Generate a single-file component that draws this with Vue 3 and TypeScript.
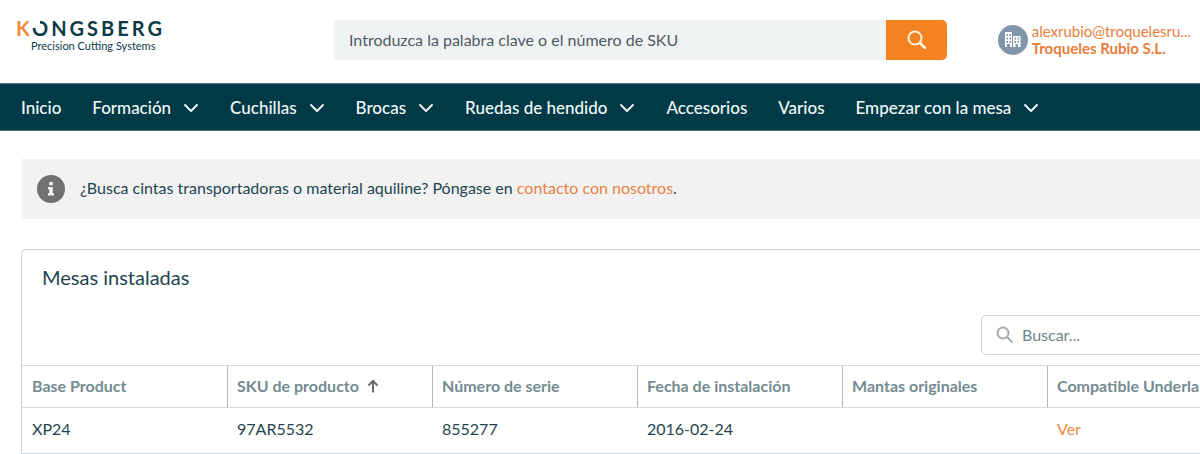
<script setup lang="ts">
import { ref } from 'vue'

interface NavItem { label: string; menu: boolean }
interface Table { product: string; sku: string; serial: string; date: string; mats: string; underlay: string }
interface Column { key: keyof Table; label: string; sorted?: boolean }

const keyword = ref('')
const filter = ref('')

const nav: NavItem[] = [
  { label: 'Inicio', menu: false },
  { label: 'Formación', menu: true },
  { label: 'Cuchillas', menu: true },
  { label: 'Brocas', menu: true },
  { label: 'Ruedas de hendido', menu: true },
  { label: 'Accesorios', menu: false },
  { label: 'Varios', menu: false },
  { label: 'Empezar con la mesa', menu: true },
]

const columns: Column[] = [
  { key: 'product', label: 'Base Product' },
  { key: 'sku', label: 'SKU de producto', sorted: true },
  { key: 'serial', label: 'Número de serie' },
  { key: 'date', label: 'Fecha de instalación' },
  { key: 'mats', label: 'Mantas originales' },
  { key: 'underlay', label: 'Compatible Underla' },
]

const rows: Table[] = [
  { product: 'XP24', sku: '97AR5532', serial: '855277', date: '2016-02-24', mats: '', underlay: 'Ver' },
]
</script>

<template>
  <div class="page">
    <header class="header">
      <a class="logo" href="#" aria-label="Kongsberg Precision Cutting Systems">
        <span class="wordmark"><span class="k">K</span><span class="o">O</span>NGSBERG</span>
        <span class="tagline">Precision Cutting Systems</span>
      </a>
      <form class="search" role="search" @submit.prevent>
        <input v-model="keyword" type="text" aria-label="Buscar productos" placeholder="Introduzca la palabra clave o el número de SKU" />
        <button type="submit" aria-label="Buscar">
          <svg width="20" height="20" viewBox="0 0 20 20" fill="none" stroke="#fff3e2" stroke-width="2" stroke-linecap="round">
            <circle cx="8" cy="8" r="6.500" />
            <path d="M13 13L18 18" stroke-width="2.500" />
          </svg>
        </button>
      </form>
      <a class="account" href="#">
        <svg width="30" height="30" viewBox="0 0 30 30">
          <circle cx="15" cy="15" r="15" fill="#8096ab" />
          <path fill="#fff" fill-rule="evenodd" d="M7 7h7v15h-2v-3H9v3H7zM8.500 9v2h1.500V9zM11.500 9v2H13V9zM8.500 12.500v2H10v-2zM11.500 12.500v2H13v-2zM8.500 16v2H10v-2zM11.500 16v2H13v-2zM15 11h7.500v11h-2.500v-3h-2.500v3H15zM16.500 12.500v2H18v-2zM19.500 12.500v2H21v-2zM16.500 16v2H18v-2zM19.500 16v2H21v-2z" />
        </svg>
        <span class="who">
          <span>alexrubio@troquelesru...</span>
          <strong>Troqueles Rubio S.L.</strong>
        </span>
      </a>
    </header>

    <nav class="nav">
      <a v-for="item in nav" :key="item.label" href="#">
        {{ item.label }}
        <svg v-if="item.menu" width="16" height="10" viewBox="0 0 16 10" fill="none" stroke="#e9f3f4" stroke-width="2" stroke-linecap="round" stroke-linejoin="round">
          <path d="M2 2L8 8L14 2" />
        </svg>
      </a>
    </nav>

    <main class="main">
      <section class="notice">
        <svg width="28" height="28" viewBox="0 0 28 28">
          <circle cx="14" cy="14" r="14" fill="#717171" />
          <path fill="#f2f2f2" d="M12.200 7h3.600v3.200h-3.600zM11 12h4.800v6.200H17V20.500h-6v-2.300h1.200v-4H11z" />
        </svg>
        <p>¿Busca cintas transportadoras o material aquiline? Póngase en <a href="#">contacto con nosotros</a>.</p>
      </section>

      <section class="card">
        <h2>Mesas instaladas</h2>
        <div class="tools">
          <label class="filter">
            <svg width="18" height="18" viewBox="0 0 18 18" fill="none" stroke="#a9a9a9" stroke-width="2">
              <circle cx="7" cy="7" r="5.500" />
              <path d="M11 11L16.500 16.500" />
            </svg>
            <input v-model="filter" type="text" aria-label="Buscar mesas" placeholder="Buscar..." />
          </label>
        </div>
        <table>
          <thead>
            <tr>
              <th v-for="col in columns" :key="col.key" scope="col">
                <div>
                  {{ col.label }}
                  <svg v-if="col.sorted" width="12" height="14" viewBox="0 0 12 14" fill="none" stroke="#6b6b6b" stroke-width="2">
                    <path d="M6 13.500V2M1.500 6.500L6 2L10.500 6.500" />
                  </svg>
                </div>
              </th>
            </tr>
          </thead>
          <tbody>
            <tr v-for="row in rows" :key="row.serial">
              <td v-for="col in columns" :key="col.key">
                <a v-if="col.key === 'underlay'" href="#">{{ row[col.key] }}</a>
                <template v-else>{{ row[col.key] }}</template>
              </td>
            </tr>
          </tbody>
        </table>
      </section>
    </main>
  </div>
</template>

<style>
body { margin: 0; background: #fff; }
</style>

<style scoped>
.page {
  font-family: Lato, "Liberation Sans", sans-serif;
  font-size: 16px;
  line-height: 20px;
  color: #1f444e;
  overflow: hidden;
}
a { color: inherit; text-decoration: none; }
input, button { font: inherit; color: inherit; border: 0; margin: 0; }

.header {
  display: flex;
  align-items: center;
  box-sizing: border-box;
  height: 83px;
  padding: 0 9px 4px 16px;
}
.logo {
  display: flex;
  flex-direction: column;
  width: 317px;
  padding-bottom: 7px;
  color: #0b3b46;
}
.wordmark {
  font-size: 20px;
  font-weight: 700;
  line-height: 20px;
  letter-spacing: 3px;
}
.k { color: #f08a3c; }
.o { position: relative; }
.o::after {
  content: "";
  position: absolute;
  left: 0;
  top: 4px;
  width: 8px;
  height: 8px;
  background: #fff;
}
.tagline { font-size: 11px; line-height: 16px; padding-left: 15px; }

.search { display: flex; width: 614px; height: 40px; border-radius: 5px; overflow: hidden; }
.search input { flex: 1; min-width: 0; padding: 0 16px; background: #f0f3f4; outline: 0; }
.search input::placeholder { color: #4f5961; opacity: 1; }
.search button {
  display: flex;
  align-items: center;
  justify-content: center;
  width: 61px;
  padding: 0;
  background: #f58220;
}

.account { display: flex; align-items: center; gap: 4px; margin-left: auto; color: #e87d3a; white-space: nowrap; }
.who { display: flex; flex-direction: column; font-size: 15px; line-height: 17px; }

.nav {
  display: flex;
  align-items: center;
  gap: 31px;
  box-sizing: border-box;
  height: 48px;
  padding: 1px 21px 0;
  background: #003a47;
  border: solid #4f7781;
  border-width: 1px 0;
  color: #f2f8f8;
  font-size: 17px;
  font-weight: 500;
  white-space: nowrap;
}
.nav a { display: flex; align-items: center; gap: 12px; }

.main { padding: 28px 0 0 21px; }
.notice { display: flex; align-items: center; gap: 15px; height: 60px; padding: 0 16px; background: #f2f2f2; }
.notice p { margin: 0; padding-bottom: 2px; }
.notice a { color: #e58345; }

.card {
  margin-top: 30px;
  border: 1px solid #cbd8db;
  border-right: 0;
  border-radius: 5px 0 0 0;
}
.card h2 { margin: 0; padding: 16px 20px 0; font-size: 20px; line-height: 22px; font-weight: 400; }
.tools { display: flex; justify-content: flex-end; padding: 27px 0 10px; }
.filter {
  display: flex;
  align-items: center;
  gap: 8px;
  box-sizing: border-box;
  width: 219px;
  height: 40px;
  padding-left: 14px;
  border: 1px solid #cbd8db;
  border-right: 0;
  border-radius: 5px 0 0 5px;
}
.filter input { flex: 1; min-width: 0; padding: 0; background: transparent; outline: 0; }
.filter input::placeholder { color: #70858c; opacity: 1; }

table { width: 100%; table-layout: fixed; border-collapse: separate; border-spacing: 0; }
th, td { box-sizing: border-box; padding: 0; text-align: left; white-space: nowrap; border-top: 1px solid #d3dcde; }
th:not(:last-child) { width: 205px; }
th { height: 42px; vertical-align: top; color: #748b91; font-weight: 700; }
th div { display: flex; align-items: center; gap: 8px; box-sizing: border-box; height: 41px; padding: 0 0 1px 9px; border-left: 1px solid #b4babc; }
th:first-child div { border-left-color: transparent; }
td { height: 46px; padding: 0 0 4px 10px; }
td a { color: #ea8b3d; }
</style>
